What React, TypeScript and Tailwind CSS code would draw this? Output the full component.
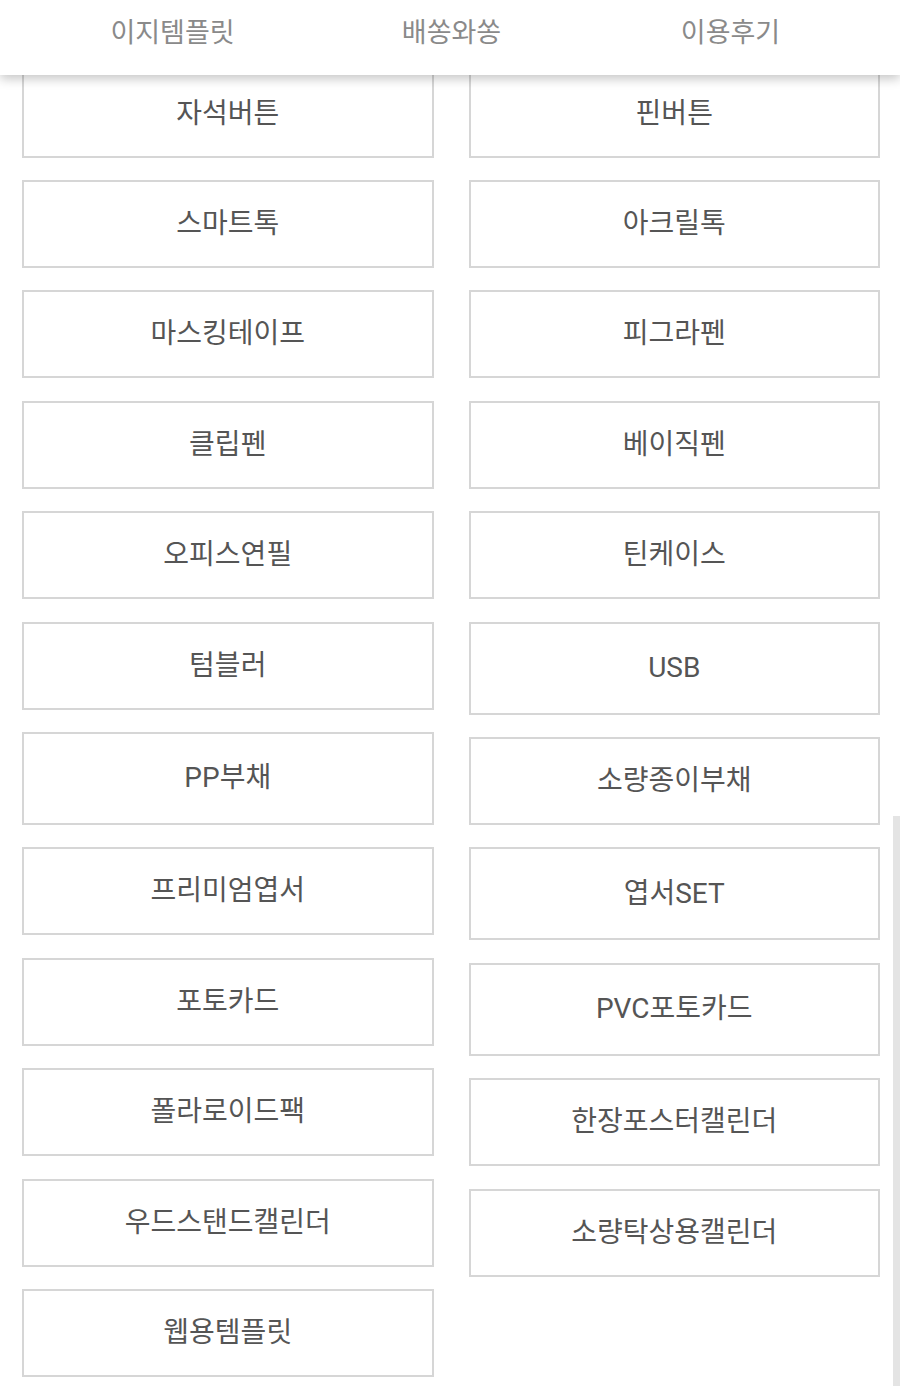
const tabs = ["이지템플릿", "배쏭와쏭", "이용후기"];

// items whose label mixes Latin letters render a little taller
const leftItems = [
  { label: "자석버튼" },
  { label: "스마트톡" },
  { label: "마스킹테이프" },
  { label: "클립펜" },
  { label: "오피스연필" },
  { label: "텀블러" },
  { label: "PP부채", tall: true },
  { label: "프리미엄엽서" },
  { label: "포토카드" },
  { label: "폴라로이드팩" },
  { label: "우드스탠드캘린더" },
  { label: "웹용템플릿" },
];

const rightItems = [
  { label: "핀버튼" },
  { label: "아크릴톡" },
  { label: "피그라펜" },
  { label: "베이직펜" },
  { label: "틴케이스" },
  { label: "USB", tall: true },
  { label: "소량종이부채" },
  { label: "엽서SET", tall: true },
  { label: "PVC포토카드", tall: true },
  { label: "한장포스터캘린더" },
  { label: "소량탁상용캘린더" },
];

type Item = { label: string; tall?: boolean };

function CategoryButton({ item }: { item: Item }) {
  return (
    <button
      className={
        item.tall
          ? "h-[93px] w-full border-2 border-[#d6d6d6] bg-white flex items-center justify-center text-[28px] leading-none text-[#555555]"
          : "h-[88px] w-full border-2 border-[#d6d6d6] bg-white flex items-center justify-center text-[28px] leading-none text-[#555555]"
      }
    >
      {item.label}
    </button>
  );
}

export default function App() {
  return (
    <div className="relative h-[1386px] w-full overflow-hidden bg-white font-['Roboto','Noto_Sans_CJK_KR',sans-serif]">
      <header className="absolute top-0 left-0 right-0 z-10 h-[75px] bg-white shadow-[0_4px_10px_rgba(0,0,0,0.22)]">
        <nav className="grid h-full grid-cols-3 pl-[33px] pr-[30px] pb-[9px]">
          {tabs.map((tab) => (
            <a
              key={tab}
              className="flex items-center justify-center text-[27px] leading-none text-[#8a8a8a]"
            >
              {tab}
            </a>
          ))}
        </nav>
      </header>

      <main className="grid grid-cols-2 gap-x-[35px] pl-[22px] pr-[20px] pt-[69.6px]">
        <div className="flex flex-col gap-[22.4px]">
          {leftItems.map((item) => (
            <CategoryButton key={item.label} item={item} />
          ))}
        </div>
        <div className="flex flex-col gap-[22.4px]">
          {rightItems.map((item) => (
            <CategoryButton key={item.label} item={item} />
          ))}
        </div>
      </main>

      {/* scrollbar thumb */}
      <div className="absolute right-0 top-[816px] bottom-0 w-[7px] bg-[#e4e4e4]" />
    </div>
  );
}
